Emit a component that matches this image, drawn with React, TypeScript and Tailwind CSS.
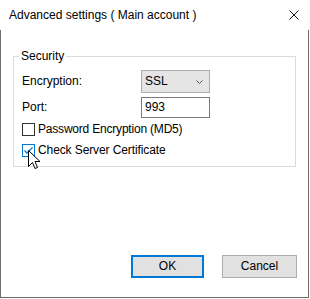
import React from "react";

function Checkbox({ checked }: { checked?: boolean }) {
  return (
    <div
      className={
        "w-[13px] h-[13px] border bg-white flex items-center justify-center shrink-0 " +
        (checked ? "border-[#0078d7]" : "border-[#333333]")
      }
    >
      {checked && (
        <svg width="11" height="11" viewBox="0 0 11 11">
          <path d="M1.5 5.5 L4 8 L9.5 2.5" fill="none" stroke="#0078d7" strokeWidth="1.3" />
        </svg>
      )}
    </div>
  );
}

export default function App() {
  return (
    <div
      className="relative w-[310px] h-[299px] bg-white text-black text-[12px] leading-[15px]"
      style={{ fontFamily: '"Segoe UI", "Liberation Sans", Arial, sans-serif' }}
    >
      <div className="h-[30px] flex items-center justify-between pl-[9px] pr-[11px]">
        <span>Advanced settings ( Main account )</span>
        <svg width="10" height="10" viewBox="0 0 10 10">
          <path d="M0.5 0.5 L9.5 9.5 M9.5 0.5 L0.5 9.5" stroke="#111" strokeWidth="1" />
        </svg>
      </div>
      <div className="w-[309px] h-[268px] border-l border-r border-b border-[#6e6e6e] flex flex-col">
        <fieldset className="ml-[12px] mt-[18px] w-[283px] border border-[#dcdcdc] pl-[8px] pr-[8px] pb-[9px]">
          <legend className="-ml-[3px] px-[2px] leading-[16px]">Security</legend>
          <div className="flex flex-col pt-[6px]">
            <div className="flex items-center h-[23px]">
              <span className="w-[119px]">Encryption:</span>
              <div className="w-[69px] h-[23px] bg-[#e5e5e5] border border-[#adadad] flex items-center justify-between pl-[3px] pr-[6px]">
                <span>SSL</span>
                <svg width="7" height="4" viewBox="0 0 7 4">
                  <path d="M0.5 0.5 L3.5 3.5 L6.5 0.5" fill="none" stroke="#555" strokeWidth="1" />
                </svg>
              </div>
            </div>
            <div className="flex items-center h-[21px] mt-[4px]">
              <span className="w-[119px]">Port:</span>
              <div className="w-[69px] h-[21px] bg-white border border-[#7a7a7a] flex items-center pl-[3px]">
                <span>993</span>
              </div>
            </div>
            <div className="flex items-center h-[13px] mt-[5px] gap-[3px]">
              <Checkbox />
              <span className="tracking-[-0.2px]">Password Encryption (MD5)</span>
            </div>
            <div className="flex items-center h-[13px] mt-[8px] gap-[3px]">
              <Checkbox checked />
              <span className="tracking-[-0.1px]">Check Server Certificate</span>
            </div>
          </div>
        </fieldset>
        <div className="flex-1" />
        <div className="flex justify-end items-center pr-[11px] pb-[19px] gap-[18px]">
          <button className="w-[73px] h-[23px] bg-[#e1e1e1] border-2 border-[#0078d7] flex items-center justify-center">
            OK
          </button>
          <button className="w-[75px] h-[23px] bg-[#e1e1e1] border border-[#adadad] flex items-center justify-center">
            Cancel
          </button>
        </div>
      </div>
      <svg
        className="absolute left-[28px] top-[150px]"
        width="13"
        height="21"
        viewBox="0 0 13 21"
      >
        <path
          d="M0.5 0.5 L0.5 16.5 L4.5 12.5 L7 18.5 L9.5 17.5 L7 11.5 L12 11.5 Z"
          fill="white"
          stroke="black"
          strokeWidth="1"
          strokeLinejoin="miter"
        />
      </svg>
    </div>
  );
}
